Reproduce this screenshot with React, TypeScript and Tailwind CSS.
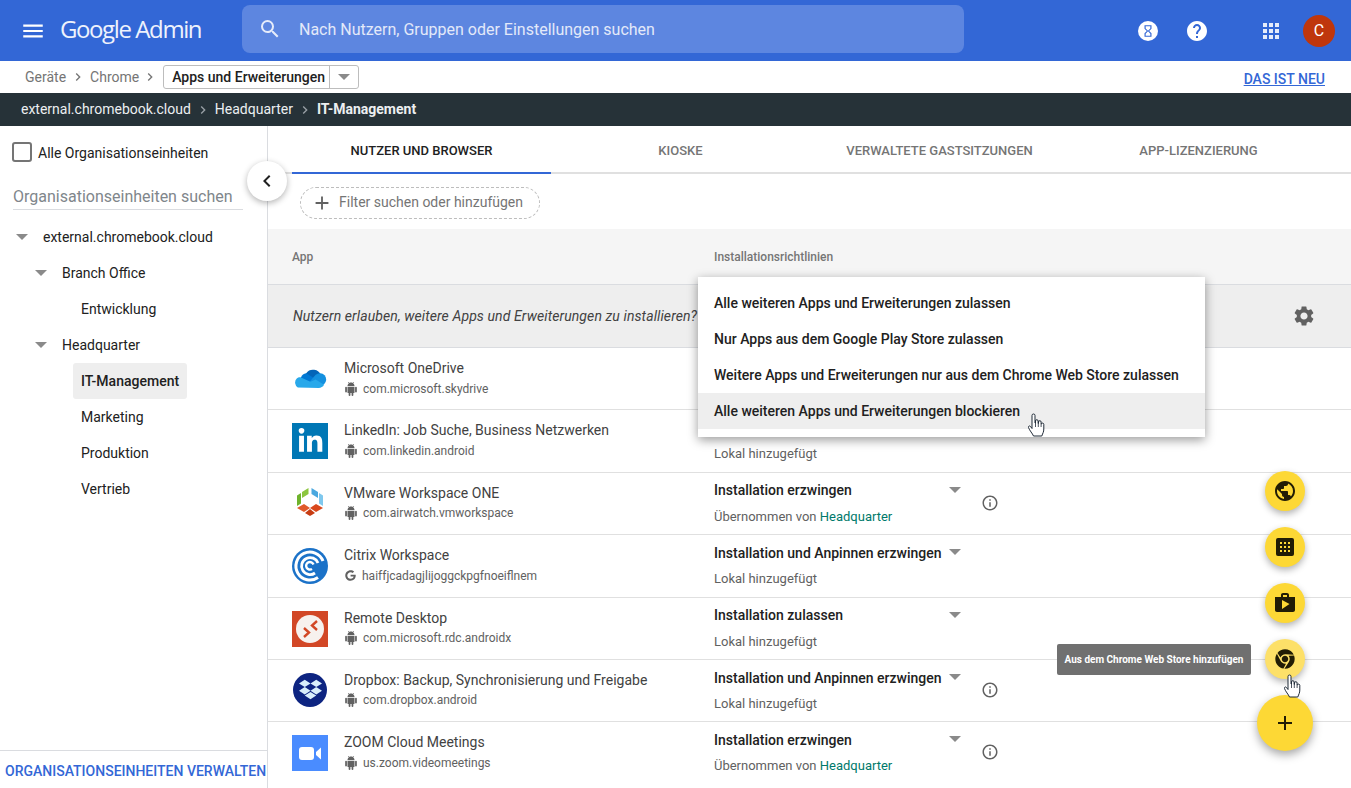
import { ReactNode } from "react";
import { FaChrome, FaDropbox, FaGoogle, FaLinkedinIn } from "react-icons/fa";
import {
  MdAdd,
  MdApps,
  MdChevronLeft,
  MdChevronRight,
  MdHelp,
  MdHourglassEmpty,
  MdInfoOutline,
  MdMenu,
  MdPublic,
  MdSearch,
  MdSettings,
  MdShop,
} from "react-icons/md";

function Caret({ className = "" }: { className?: string }) {
  return <span className={`block w-0 h-0 border-x-[6px] border-t-[6px] border-x-transparent border-t-[#8a8a8a] ${className}`} />;
}

function AndroidIcon() {
  return (
    <svg viewBox="0 0 24 24" className="w-[14px] h-[14px] shrink-0" fill="#616161">
      <path d="M6 18c0 .55.45 1 1 1h1v3.500c0 .83.67 1.500 1.500 1.500s1.500-.67 1.500-1.500V19h2v3.500c0 .83.67 1.500 1.500 1.500s1.500-.67 1.500-1.500V19h1c.55 0 1-.45 1-1V8H6v10zM3.500 8C2.670 8 2 8.670 2 9.500v7c0 .83.67 1.500 1.500 1.500S5 17.330 5 16.500v-7C5 8.670 4.330 8 3.500 8zm17 0c-.83 0-1.500.67-1.500 1.500v7c0 .83.67 1.500 1.500 1.500s1.500-.67 1.500-1.500v-7c0-.83-.67-1.500-1.500-1.500zm-4.970-5.840l1.300-1.300c.2-.2.2-.51 0-.71-.2-.2-.51-.2-.71 0l-1.480 1.480C13.850 1.230 12.950 1 12 1c-.96 0-1.860.23-2.660.63L7.850.15c-.2-.2-.51-.2-.71 0-.2.2-.2.51 0 .71l1.310 1.310C6.970 3.260 6 5.010 6 7h12c0-1.990-.97-3.750-2.470-4.840z" />
    </svg>
  );
}

function HandCursor({ className }: { className: string }) {
  return (
    <svg viewBox="0 0 18 24" className={`absolute w-[18px] h-[24px] ${className}`} fill="#ffffff" stroke="#1f2a37" strokeWidth="1" strokeLinejoin="round">
      <path d="M5 2.500a1.500 1.500 0 0 1 3 0V10h.5V8a1.300 1.300 0 0 1 2.600 0v2.500h.4V9a1.300 1.300 0 0 1 2.600 0v2h.3v-.3a1.300 1.300 0 0 1 2.400.6V16c0 3-1 4-2 7H6.500c-1-2.500-4-5.500-5-8.500-.4-1.300 1-2.200 2-1l1.500 2z" />
      <path d="M8.500 10v4M11.300 10.500V14M14.100 11v3" fill="none" strokeWidth="0.800" />
    </svg>
  );
}

function OneDriveLogo() {
  return (
    <svg viewBox="0 0 36 36" className="w-9 h-9">
      <g transform="translate(-0.500 -3.500) scale(1.050)">
        <path d="M14 15a8 8 0 0 1 14 2l-8 9-10-5z" fill="#0364b8" />
        <path d="M9 19a6.500 6.500 0 0 1 5-4l8 5-8 8H6z" fill="#0078d4" />
        <path d="M23 16.500a6 6 0 0 1 8 9l-4 2-11-3z" fill="#1490df" />
        <path d="M6 28.500a5.500 5.500 0 0 1-1-8.500c1-1 3-1.500 4-1l9 4 5-2 8 5c-1 2-3 3-5 3z" fill="#28a8ea" />
      </g>
    </svg>
  );
}

function LinkedInLogo() {
  return (
    <div className="w-9 h-9 bg-[#0077b5] flex items-center justify-center">
      <FaLinkedinIn className="text-white" size={27} />
    </div>
  );
}

function VmwareLogo() {
  return (
    <svg viewBox="0 0 36 36" className="w-9 h-9">
      <g transform="translate(0 -3)">
        <polygon points="16.500,5 10,9 10,15 16.500,11" fill="#8cc63f" />
        <polygon points="9,10 5,12.500 5,23 9,20.500" fill="#6fb32c" />
        <polygon points="19.500,5 26,9 26,15 19.500,11" fill="#4aa8df" />
        <polygon points="27,10 31,12.500 31,23 27,20.500" fill="#7fc8ee" />
        <polygon points="5,25 12,21 18,25 12,29" fill="#e0592a" />
        <polygon points="31,25 24,21 18,25 24,29" fill="#d9481c" />
        <polygon points="13,30 18,26 23,30 18,33" fill="#c73c12" />
      </g>
    </svg>
  );
}

function CitrixLogo() {
  return (
    <svg viewBox="0 0 36 36" className="w-9 h-9">
      <circle cx="18" cy="18" r="18" fill="#1b72c8" />
      <g fill="none" stroke="#ffffff" strokeLinecap="butt">
        <path d="M31 13a14 14 0 1 0-5 16.500" strokeWidth="3" />
        <path d="M26 15a8.500 8.500 0 1 0-3 10" strokeWidth="2.800" />
        <path d="M21.500 16.500a3.800 3.800 0 1 0-1.500 4.500" strokeWidth="2.400" />
      </g>
    </svg>
  );
}

function RemoteDesktopLogo() {
  return (
    <svg viewBox="0 0 36 36" className="w-9 h-9">
      <rect width="36" height="36" fill="#d24726" />
      <circle cx="18" cy="18" r="14" fill="#f7f1ee" />
      <path d="M12 17l5 4.500-5 4.500" fill="none" stroke="#d24726" strokeWidth="2.400" />
      <path d="M25 10l-5 4.500 5 4.500" fill="none" stroke="#d24726" strokeWidth="2.400" />
    </svg>
  );
}

function DropboxLogo() {
  return (
    <div className="w-[34px] h-[34px] mx-px rounded-full bg-[#0d2481] flex items-center justify-center">
      <FaDropbox className="text-[#d9eefb]" size={23} />
    </div>
  );
}

function ZoomLogo() {
  return (
    <svg viewBox="0 0 36 36" className="w-9 h-9">
      <rect width="36" height="36" fill="#4a8cff" />
      <rect x="7" y="12" width="15" height="13" rx="3" fill="#fff" />
      <path d="M24 17l5-4.500v12l-5-4.500z" fill="#fff" />
    </svg>
  );
}

const tree = [
  { label: "external.chromebook.cloud", pad: "pl-[43px]", caret: "left-[16px]" },
  { label: "Branch Office", pad: "pl-[62px]", caret: "left-[35px]" },
  { label: "Entwicklung", pad: "pl-[81px]" },
  { label: "Headquarter", pad: "pl-[62px]", caret: "left-[35px]" },
  { label: "IT-Management", pad: "pl-[81px]", active: true },
  { label: "Marketing", pad: "pl-[81px]" },
  { label: "Produktion", pad: "pl-[81px]" },
  { label: "Vertrieb", pad: "pl-[81px]" },
];

type Row = {
  name: string;
  pkg: string;
  logo: ReactNode;
  google?: boolean;
  policy?: string;
  source?: string;
  inherited?: boolean;
  info?: boolean;
};

// Die Richtlinie der ersten beiden Zeilen liegt hinter dem offenen Menue
const rows: Row[] = [
  { name: "Microsoft OneDrive", pkg: "com.microsoft.skydrive", logo: <OneDriveLogo /> },
  { name: "LinkedIn: Job Suche, Business Netzwerken", pkg: "com.linkedin.android", logo: <LinkedInLogo />, source: "Lokal hinzugefügt" },
  { name: "VMware Workspace ONE", pkg: "com.airwatch.vmworkspace", logo: <VmwareLogo />, policy: "Installation erzwingen", source: "Übernommen von ", inherited: true, info: true },
  { name: "Citrix Workspace", pkg: "haiffjcadagjlijoggckpgfnoeiflnem", logo: <CitrixLogo />, google: true, policy: "Installation und Anpinnen erzwingen", source: "Lokal hinzugefügt" },
  { name: "Remote Desktop", pkg: "com.microsoft.rdc.androidx", logo: <RemoteDesktopLogo />, policy: "Installation zulassen", source: "Lokal hinzugefügt" },
  { name: "Dropbox: Backup, Synchronisierung und Freigabe", pkg: "com.dropbox.android", logo: <DropboxLogo />, policy: "Installation und Anpinnen erzwingen", source: "Lokal hinzugefügt", info: true },
  { name: "ZOOM Cloud Meetings", pkg: "us.zoom.videomeetings", logo: <ZoomLogo />, policy: "Installation erzwingen", source: "Übernommen von ", inherited: true, info: true },
];

const menuItems = [
  "Alle weiteren Apps und Erweiterungen zulassen",
  "Nur Apps aus dem Google Play Store zulassen",
  "Weitere Apps und Erweiterungen nur aus dem Chrome Web Store zulassen",
  "Alle weiteren Apps und Erweiterungen blockieren",
];

const fabBase = "w-10 h-10 rounded-full flex items-center justify-center text-[#211c05] shadow-[0_3px_7px_rgba(0,0,0,0.3)]";

export default function App() {
  return (
    <div className="relative w-[1351px] h-[788px] overflow-hidden bg-white font-['Roboto',sans-serif] text-[14px] text-[#212121]">
      {/* Kopfzeile */}
      <header className="h-[61px] bg-[#3367d6] flex items-center text-white">
        <MdMenu size={26} className="ml-[20px]" />
        <span className="ml-[14px] mt-[-4px] w-[182px] font-['Open_Sans',sans-serif] text-[24px] tracking-[-1.4px] text-[#eef2fc]">Google Admin</span>
        <div className="w-[722px] h-[48px] mt-[-3px] rounded-lg bg-[#5d86e0] flex items-center">
          <MdSearch size={24} className="ml-[16px] text-[#e6ecfa]" />
          <span className="ml-[17px] pt-[2px] text-[16px] text-[#e3e9f9]">Nach Nutzern, Gruppen oder Einstellungen suchen</span>
        </div>
        <div className="ml-[174px] w-5 h-5 rounded-full bg-white flex items-center justify-center">
          <MdHourglassEmpty size={14} className="text-[#3367d6]" />
        </div>
        <MdHelp size={24} className="ml-[27px]" />
        <MdApps size={24} className="ml-[50px] text-[#e6ecfa]" />
        <div className="ml-[20px] w-8 h-8 rounded-full bg-[#bf360c] flex items-center justify-center text-[16px]">C</div>
      </header>

      {/* Brotkrumen */}
      <div className="h-[32px] flex items-center pl-[25px] pr-[26px] text-[#757575]">
        <span>Geräte</span>
        <MdChevronRight size={16} className="mx-[4px]" />
        <span>Chrome</span>
        <MdChevronRight size={16} className="ml-[3px] mr-[5px]" />
        <div className="flex h-[24px] w-[196px] items-stretch rounded-[3px] border border-[#bdbdbd] text-[#212121]">
          <span className="w-[166px] pl-[8px] font-medium leading-[22px] border-r border-[#bdbdbd]">Apps und Erweiterungen</span>
          <span className="flex-1 flex items-center justify-center"><Caret /></span>
        </div>
        <a className="ml-auto mt-[4px] font-medium text-[#3367d6] underline">DAS IST NEU</a>
      </div>

      <div className="h-[33px] bg-[#263238] flex items-center pl-[21px] text-[#eceff1]">
        <span>external.chromebook.cloud</span>
        <MdChevronRight size={16} className="mx-[4px] text-[#9aa0a6]" />
        <span>Headquarter</span>
        <MdChevronRight size={16} className="mx-[4px] text-[#9aa0a6]" />
        <span className="font-bold">IT-Management</span>
      </div>

      <div className="flex h-[662px]">
        {/* Organisationseinheiten */}
        <aside className="w-[268px] shrink-0 border-r border-[#dadce0] flex flex-col">
          <label className="flex items-center h-[20px] mt-[16px] pl-[12px]">
            <span className="w-5 h-5 rounded-[3px] border-2 border-[#757575]" />
            <span className="ml-[6px] pt-[2px]">Alle Organisationseinheiten</span>
          </label>
          <div className="mx-[13px] mt-[19px] h-[29px] w-[230px] border-b border-[#dadce0] pt-[5px] text-[16px] leading-[22px] text-[#80868b]">Organisationseinheiten suchen</div>
          <ul className="mt-[9px]">
            {tree.map((t) => (
              <li key={t.label} className={`relative h-[36px] flex items-center ${t.pad}`}>
                {t.caret && <Caret className={`absolute top-[15px] ${t.caret}`} />}
                {t.active ? (
                  <span className="ml-[-8px] h-[36px] px-[8px] rounded-[3px] bg-[#eeeeee] leading-[36px] font-medium">{t.label}</span>
                ) : (
                  <span>{t.label}</span>
                )}
              </li>
            ))}
          </ul>
          <div className="mt-auto h-[38px] border-t border-[#dadce0] pl-[5px] pt-[10px] font-medium text-[#3367d6] whitespace-nowrap">ORGANISATIONSEINHEITEN VERWALTEN</div>
        </aside>

        {/* Inhalt */}
        <main className="flex-1 min-w-0">
          <div className="h-[48px] border-b-2 border-[#e0e0e0] pl-[24px] flex text-[13px] font-medium text-[#757575]">
            {["NUTZER UND BROWSER", "KIOSKE", "VERWALTETE GASTSITZUNGEN", "APP-LIZENZIERUNG"].map((tab, i) => (
              <div key={tab} className={`w-[259px] h-[48px] pt-[4px] border-b-2 flex items-center justify-center ${i === 0 ? "border-[#3367d6] text-[#212121]" : "border-transparent"}`}>
                {tab}
              </div>
            ))}
          </div>
          <div className="h-[55px] flex items-center pl-[32px] pt-[2px]">
            <div className="w-[240px] h-[32px] rounded-full border border-dashed border-[#bdbdbd] flex items-center text-[#757575]">
              <MdAdd size={22} className="ml-[10px] text-[#616161]" />
              <span className="ml-[6px]">Filter suchen oder hinzufügen</span>
            </div>
          </div>
          <div className="h-[55px] bg-[#f5f5f5] flex items-center pl-[24px] text-[12px] font-medium text-[#757575]">
            <span className="w-[422px]">App</span>
            <span>Installationsrichtlinien</span>
          </div>
          <div className="h-[64px] bg-[#eeeeee] border-y border-[#dadce0] flex items-center pl-[25px] pr-[35px] italic tracking-[0.1px] text-[#424242]">
            <span>Nutzern erlauben, weitere Apps und Erweiterungen zu installieren?</span>
            <MdSettings size={24} className="ml-auto text-[#616161]" />
          </div>
          {rows.map((r) => (
            <div key={r.name} className="h-[62.400px] border-b border-[#e0e0e0] last:border-b-0 flex pl-[24px]">
              <div className="w-[52px] pt-[13px]">{r.logo}</div>
              <div className="w-[370px] pt-[11px]">
                <div className="leading-[18px] text-[#424242]">{r.name}</div>
                <div className="mt-[3.500px] flex items-center text-[12px] leading-[16px] text-[#616161]">
                  {r.google ? <FaGoogle size={11} className="mx-px text-[#616161]" /> : <AndroidIcon />}
                  <span className="ml-[5px]">{r.pkg}</span>
                </div>
              </div>
              <div className="w-[248px] pt-[8.600px]">
                {r.policy ? (
                  <div className="flex items-center h-[18px] leading-[18px] font-medium">
                    <span>{r.policy}</span>
                    <Caret className="ml-auto mr-[1px] mt-[-1px]" />
                  </div>
                ) : (
                  <div className="h-[18px]" />
                )}
                {r.source && (
                  <div className="mt-[8.500px] text-[13px] leading-[18px] text-[#616161]">
                    {r.source}
                    {r.inherited && <span className="text-[#00796b]">Headquarter</span>}
                  </div>
                )}
              </div>
              {r.info && <MdInfoOutline size={18} className="ml-[19px] mt-[21px] text-[#616161]" />}
            </div>
          ))}
        </main>
      </div>

      {/* Sidebar einklappen */}
      <button className="absolute left-[247px] top-[161px] w-10 h-10 rounded-full bg-white flex items-center justify-center shadow-[0_2px_6px_rgba(0,0,0,0.3)]">
        <MdChevronLeft size={24} className="text-[#212121]" />
      </button>

      {/* Richtlinien-Menue */}
      <div className="absolute left-[698px] top-[277px] w-[507px] h-[160px] bg-white py-[8px] shadow-[0_3px_10px_rgba(0,0,0,0.4)]">
        {menuItems.map((item, i) => (
          <div key={item} className={`h-[36px] flex items-center pl-[16px] font-medium ${i === 3 ? "bg-[#eeeeee]" : ""}`}>
            {item}
          </div>
        ))}
      </div>
      <HandCursor className="left-[1027px] top-[413px]" />

      {/* Aktionsschaltflaechen */}
      <div className="absolute left-[1257px] top-[471px] w-[56px] flex flex-col items-center gap-[16px]">
        <div className={`${fabBase} bg-[#fdd835]`}><MdPublic size={24} /></div>
        <div className={`${fabBase} bg-[#fdd835]`}>
          <svg viewBox="0 0 18 18" className="w-[18px] h-[18px]">
            <rect width="18" height="18" rx="2" fill="#211c05" />
            {[5, 9, 13].flatMap((y) => [5, 9, 13].map((x) => <rect key={`${x}-${y}`} x={x - 1} y={y - 1} width="2" height="2" fill="#fdd835" />))}
          </svg>
        </div>
        <div className={`${fabBase} bg-[#fdd835]`}><MdShop size={24} /></div>
        <div className={`${fabBase} bg-[#fde068]`}><FaChrome size={20} /></div>
        <div className="w-14 h-14 rounded-full bg-[#fdd835] flex items-center justify-center text-[#211c05] shadow-[0_4px_10px_rgba(0,0,0,0.35)]">
          <MdAdd size={24} />
        </div>
      </div>
      <div className="absolute left-[1057px] top-[644px] w-[194px] h-[31px] rounded-[2px] bg-[#707070] flex items-center justify-center text-[10px] font-bold text-white whitespace-nowrap">
        Aus dem Chrome Web Store hinzufügen
      </div>
      <HandCursor className="left-[1283px] top-[674px]" />
    </div>
  );
}
